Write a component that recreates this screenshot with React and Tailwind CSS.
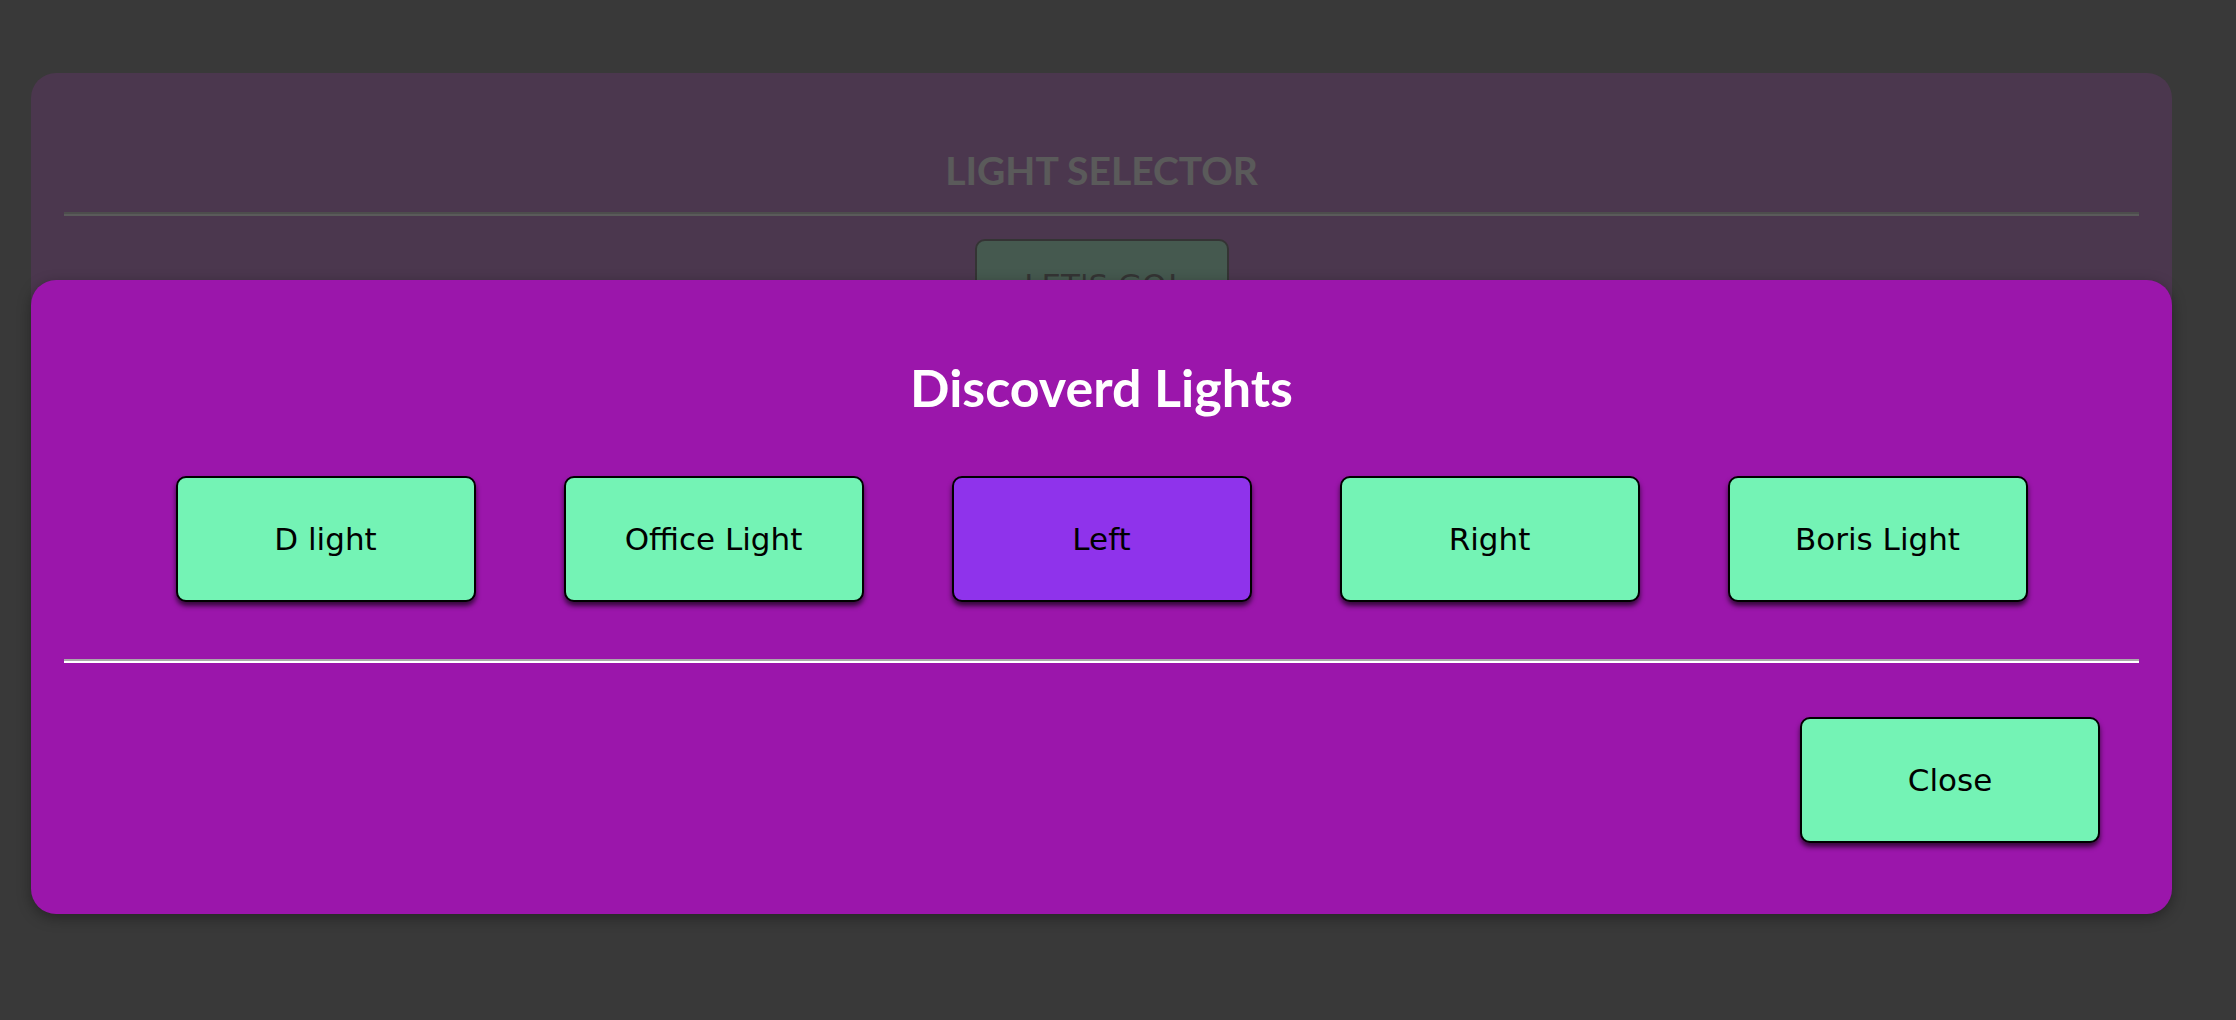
import React, { useState } from 'react';

const LIGHTS = ['D light', 'Office Light', 'Left', 'Right', 'Boris Light'];

const btnBase =
  "w-[300px] h-[126px] rounded-[10px] border-2 border-black shadow-[0_4px_5px_rgba(0,0,0,0.65)] text-black text-[31px] font-['DejaVu_Sans',sans-serif] flex items-center justify-center";

const App = () => {
  const [selected, setSelected] = useState('Left');

  return (
    <div className="relative min-h-screen bg-[#212121] overflow-hidden">
      {/* Page underneath */}
      <div className="pl-[31px] pr-[64px] pt-[73px]">
        <div className="rounded-[25px] bg-[#9b16ab] px-[33px] pt-[67px] pb-[60px]">
          <h1 className="text-center text-white text-[39px] leading-[60px] font-bold font-['Lato',sans-serif]">
            LIGHT SELECTOR
          </h1>
          <div className="mt-[12px] border-t-2 border-b-2 border-t-[#aaaaaa] border-b-white" />
          <div className="mt-[23px] flex justify-center">
            <button className="w-[254px] h-[92px] rounded-[10px] border-2 border-black bg-[#74f3b5] text-black text-[31px] font-['DejaVu_Sans',sans-serif]">
              LET'S GO!
            </button>
          </div>
        </div>
      </div>

      {/* Dim overlay */}
      <div className="absolute inset-0 bg-[rgba(61,61,61,0.85)]" />

      {/* Modal */}
      <div className="absolute left-[31px] top-[280px] w-[2141px] rounded-[25px] bg-[#9b16ab] px-[33px] pt-[72px] pb-[71px] shadow-[0_4px_14px_rgba(0,0,0,0.35)] flex flex-col">
        <h2 className="text-center text-white text-[52px] leading-[70px] font-bold font-['Lato',sans-serif]">
          Discoverd Lights
        </h2>
        <div className="mt-[54px] flex justify-center gap-[88px]">
          {LIGHTS.map((name) => (
            <button
              key={name}
              onClick={() => setSelected(name)}
              className={`${btnBase} ${selected === name ? 'bg-[#8f33eb]' : 'bg-[#74f3b5]'}`}
            >
              {name}
            </button>
          ))}
        </div>
        <div className="mt-[57px] border-t-2 border-b-2 border-t-[#aaaaaa] border-b-white" />
        <div className="mt-[54px] flex justify-end pr-[39px]">
          <button className={`${btnBase} bg-[#74f3b5]`}>Close</button>
        </div>
      </div>
    </div>
  );
};

export default App;
